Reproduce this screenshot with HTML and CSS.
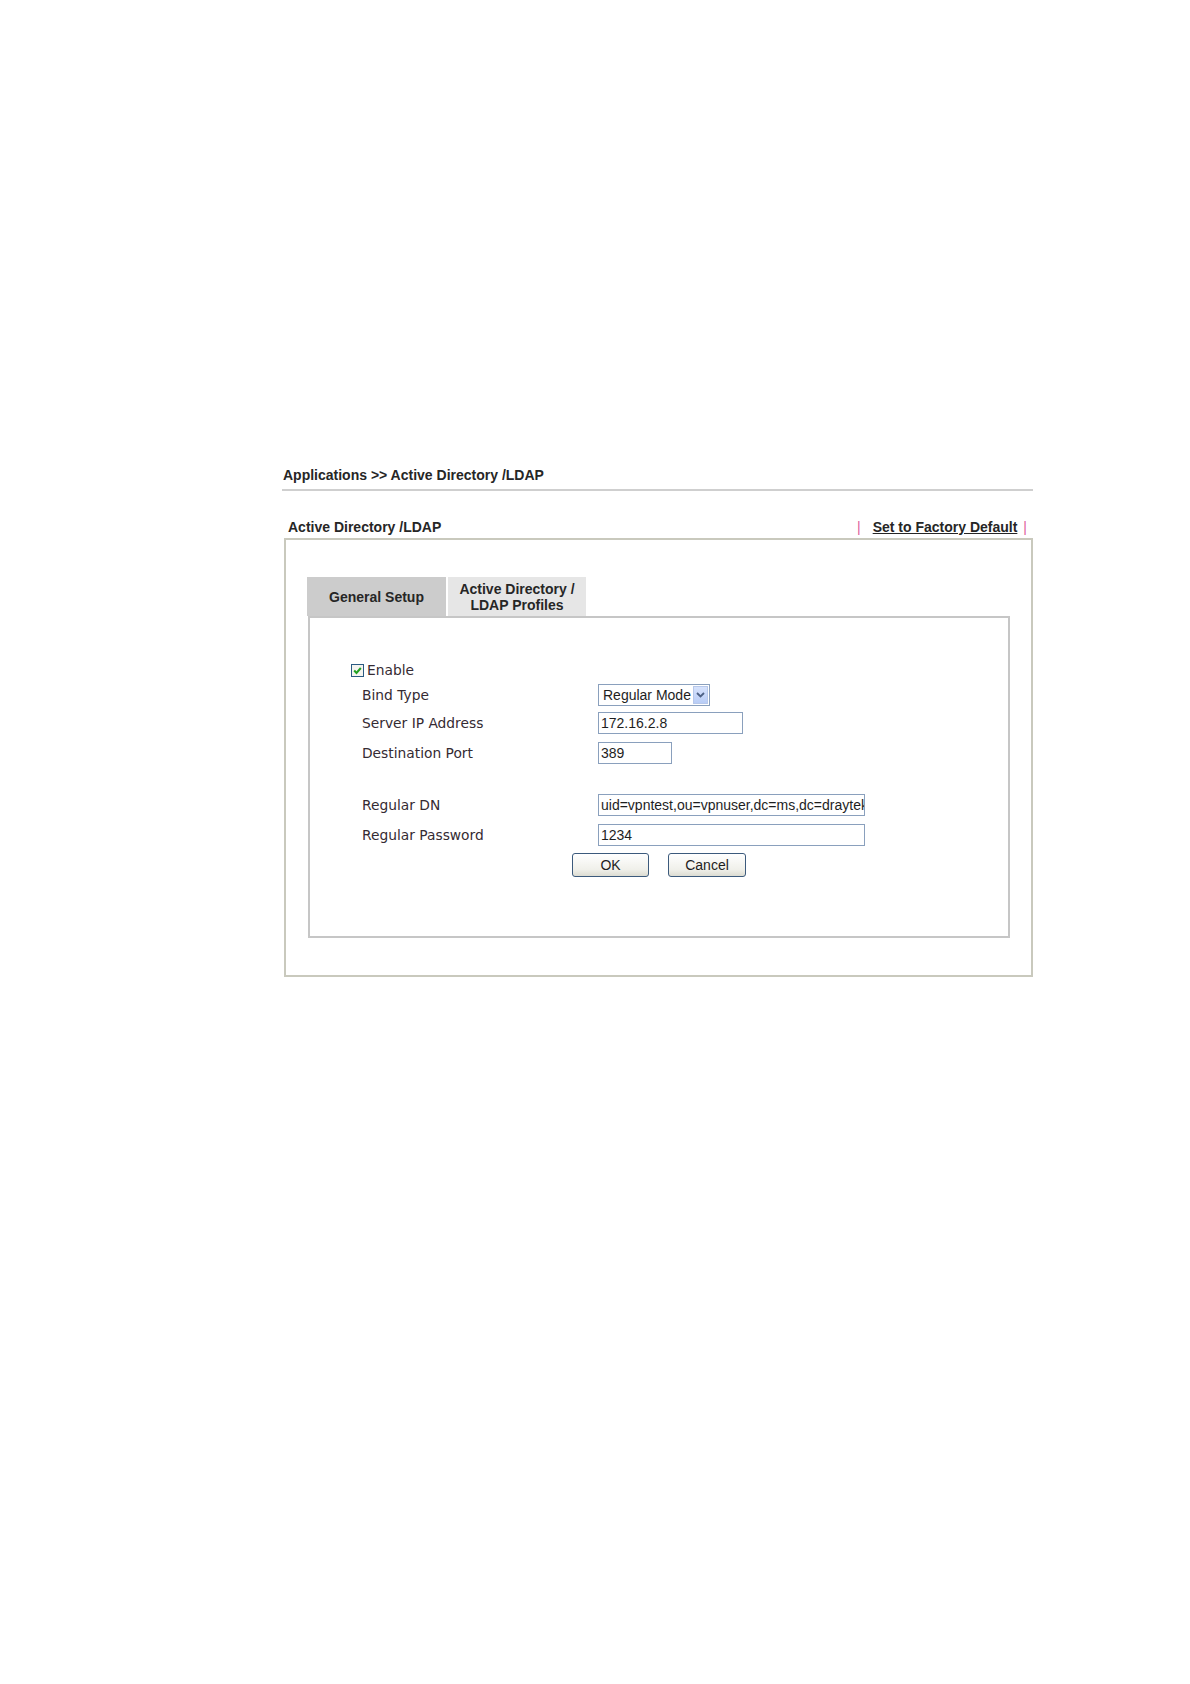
FILE: index.html
```html
<!DOCTYPE html>
<html>
<head>
<meta charset="utf-8">
<link rel="stylesheet" href="styles.css">
</head>
<body>
<div class="page">
  <div class="crumb">Applications &gt;&gt; Active Directory /LDAP</div>
  <div class="section-head">
    <span class="section-title">Active Directory /LDAP</span>
    <span class="factory"><span class="pipe">|</span><a class="factory-link" href="#">Set to Factory Default</a><span class="pipe">|</span></span>
  </div>
  <div class="outer">
    <div class="tabs">
      <div class="tab tab-active">General Setup</div>
      <div class="tab tab-idle">Active Directory /<br>LDAP Profiles</div>
    </div>
    <div class="inner">
      <div class="row row-enable">
        <span class="checkbox">
          <svg width="13" height="13" viewBox="0 0 13 13"><rect x="0.5" y="0.5" width="12" height="12" fill="#f4f4f0" stroke="#2a5a82"/><path d="M3.2 6.5 L5.5 9 L9.8 4" fill="none" stroke="#21a121" stroke-width="2"/></svg>
        </span>
        <span class="enable-text">Enable</span>
      </div>
      <div class="row row-bind">
        <span class="label">Bind Type</span>
        <div class="select">
          <span class="select-text">Regular Mode</span>
          <span class="select-arrow"><svg width="9" height="6" viewBox="0 0 9 6"><path d="M1 1 L4.5 4.5 L8 1" fill="none" stroke="#4d6185" stroke-width="1.8"/></svg></span>
        </div>
      </div>
      <div class="row row-server">
        <span class="label">Server IP Address</span>
        <div class="input input-ip">172.16.2.8</div>
      </div>
      <div class="row row-port">
        <span class="label">Destination Port</span>
        <div class="input input-port">389</div>
      </div>
      <div class="row row-dn">
        <span class="label">Regular DN</span>
        <div class="input input-wide">uid=vpntest,ou=vpnuser,dc=ms,dc=draytek,dc=com</div>
      </div>
      <div class="row row-pass">
        <span class="label">Regular Password</span>
        <div class="input input-wide">1234</div>
      </div>
      <div class="buttons">
        <button class="btn btn-ok">OK</button>
        <button class="btn btn-cancel">Cancel</button>
      </div>
    </div>
  </div>
</div>
</body>
</html>
```

FILE: styles.css
```css
html, body {
  margin: 0;
  padding: 0;
  background: #ffffff;
}

.page {
  margin-left: 282px;
  width: 751px;
  padding-top: 467px;
  font-family: "Liberation Sans", Arial, sans-serif;
  color: #262626;
}

.crumb {
  font-weight: bold;
  font-size: 14px;
  line-height: 16px;
  padding-left: 1px;
  padding-bottom: 6px;
  border-bottom: 2px solid #cfcfcf;
}

.section-head {
  display: flex;
  justify-content: space-between;
  align-items: flex-start;
  margin-top: 28px;
  height: 16px;
  margin-bottom: 3px;
  font-weight: bold;
  font-size: 14px;
  line-height: 16px;
}

.section-title {
  padding-left: 6px;
}

.factory {
  display: flex;
  align-items: flex-start;
  padding-right: 6px;
}

.pipe {
  color: #e0609c;
  font-weight: normal;
}

.factory-link {
  color: #262626;
  text-decoration: underline;
  margin-left: 12px;
  margin-right: 6px;
}

.outer {
  margin-left: 2px;
  border: 2px solid #c9c9bd;
  padding: 37px 21px 37px 21px;
}

.tabs {
  display: flex;
  gap: 2px;
  height: 39px;
}

.tab {
  display: flex;
  align-items: center;
  justify-content: center;
  text-align: center;
  font-weight: bold;
  font-size: 14px;
  line-height: 16px;
  color: #262626;
}

.tab-active {
  width: 139px;
  background: #cccccc;
}

.tab-idle {
  width: 138px;
  background: #e6e6e6;
}

.inner {
  margin-left: 1px;
  border: 2px solid #c6c6c6;
  padding: 42px 0 59px 0;
}

.row {
  display: flex;
  align-items: center;
  height: 22px;
}

.label {
  font-family: "DejaVu Sans", Verdana, sans-serif;
  font-size: 13.8px;
  line-height: 16px;
  color: #352b33;
  padding-left: 52px;
  width: 288px;
  box-sizing: border-box;
  flex-shrink: 0;
}

.row-enable {
  height: 20px;
  padding-left: 41px;
}

.checkbox {
  display: flex;
  width: 13px;
  height: 13px;
}

.enable-text {
  font-family: "DejaVu Sans", Verdana, sans-serif;
  font-size: 13.8px;
  color: #352b33;
  margin-left: 3px;
}

.row-bind { margin-top: 4px; }
.row-server { margin-top: 6px; }
.row-port { margin-top: 8px; }
.row-dn { margin-top: 30px; }
.row-pass { margin-top: 8px; }

.select,
.input {
  box-sizing: border-box;
  height: 100%;
  border: 1px solid #8aa0bd;
  background: #ffffff;
  font-family: "Liberation Sans", Arial, sans-serif;
  font-size: 14px;
  color: #1e1e1e;
  display: flex;
  align-items: center;
  overflow: hidden;
  white-space: nowrap;
}

.select {
  width: 112px;
  padding-left: 4px;
  justify-content: space-between;
  padding-right: 1px;
}

.select-arrow {
  width: 15px;
  height: 18px;
  background: linear-gradient(#d6e2fc, #b9cdf6);
  border: 1px solid #b7c8ea;
  box-sizing: border-box;
  display: flex;
  align-items: center;
  justify-content: center;
}

.input {
  padding-left: 2px;
}

.input-ip { width: 145px; }
.input-port { width: 74px; }
.input-wide { width: 267px; }

.buttons {
  display: flex;
  gap: 19px;
  margin-top: 7px;
  padding-left: 262px;
}

.btn {
  height: 24px;
  border: 1px solid #3c5a7c;
  border-radius: 3px;
  background: linear-gradient(#ffffff, #f0f0ea 70%, #dcdcd2);
  font-family: "Liberation Sans", Arial, sans-serif;
  font-size: 14px;
  color: #1e1e1e;
  padding: 0;
}

.btn-ok { width: 77px; }
.btn-cancel { width: 78px; }
```
